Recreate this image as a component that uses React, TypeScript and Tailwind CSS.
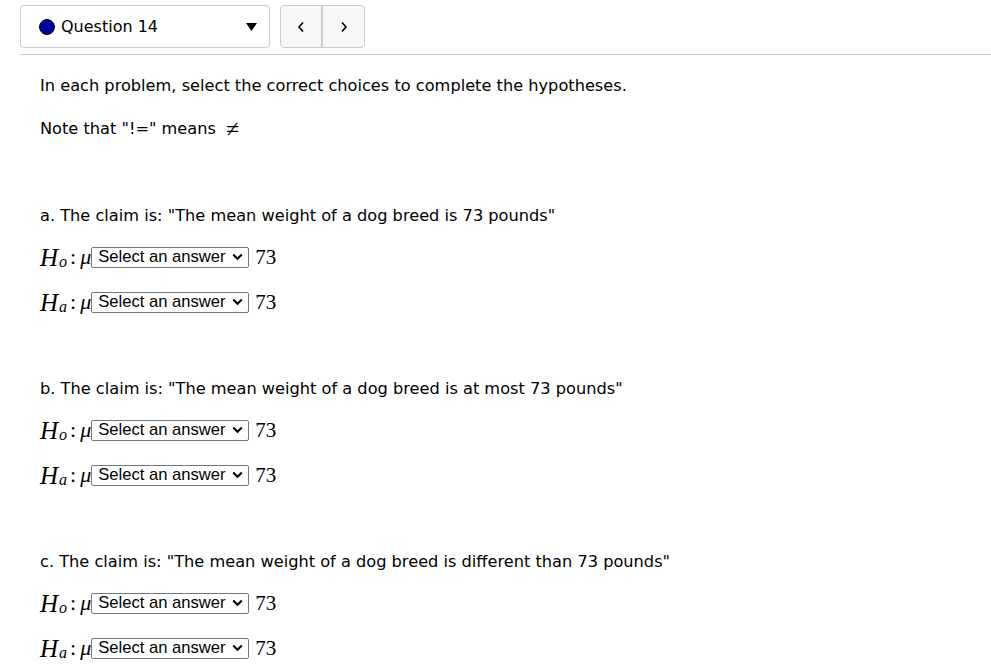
import React from "react";

function Chevron() {
  return (
    <svg width="11" height="8" viewBox="0 0 11 8" className="ml-[6px]">
      <path d="M1.2 1.5 L5.5 5.8 L9.8 1.5" fill="none" stroke="#000" strokeWidth="2" />
    </svg>
  );
}

function SelectBox() {
  return (
    <span className="inline-flex items-center h-[21px] w-[158px] border border-[#767676] rounded-[2px] bg-white pl-[6px] pr-[4px] text-[16.6px] leading-none text-black font-['Liberation_Sans',Arial,sans-serif] not-italic">
      Select an answer
      <Chevron />
    </span>
  );
}

function HypRow({ sub }: { sub: string }) {
  return (
    <div className="flex items-center h-[24px] font-['Liberation_Serif','Times_New_Roman',serif] text-black">
      <span className="italic text-[25px] leading-none">H</span>
      <span className="italic text-[16px] leading-none mt-[10px] ml-[1px]">{sub}</span>
      <span className="text-[22px] leading-none ml-[3px] mr-[4px]">:</span>
      <span className="italic text-[22px] leading-none">μ</span>
      <SelectBox />
      <span className="text-[21px] leading-none ml-[6px]">73</span>
    </div>
  );
}

function Problem({ label, claim, first }: { label: string; claim: string; first?: boolean }) {
  return (
    <div className={first ? "mt-[65px]" : "mt-[65px]"}>
      <p className="text-[16.2px] leading-[20px]">
        {label}. The claim is: "{claim}"
      </p>
      <div className="mt-[19px] space-y-[21px]">
        <HypRow sub="o" />
        <HypRow sub="a" />
      </div>
    </div>
  );
}

export default function App() {
  return (
    <div className="w-[991px] h-[669px] overflow-hidden bg-white text-black font-['DejaVu_Sans',sans-serif]">
      <div className="pl-[20px] pt-[5px]">
        <div className="flex items-center gap-[10px]">
          <div className="flex items-center w-[250px] h-[43px] border border-[#ccc] rounded-[4px] pl-[18px] pr-[10px]">
            <span className="w-[16px] h-[16px] rounded-full bg-[#00009a] border border-black" />
            <span className="ml-[6px] text-[16px] text-black">Question 14</span>
            <svg width="11" height="8" viewBox="0 0 11 8" className="ml-auto mr-[2px]">
              <path d="M0 0 L11 0 L5.5 8 Z" fill="#000" />
            </svg>
          </div>
          <div className="flex h-[43px] border border-[#ccc] rounded-[4px] bg-[#f7f7f7]">
            <div className="w-[42px] flex items-center justify-center border-r-2 border-[#ccc]">
              <svg width="8" height="12" viewBox="0 0 8 12">
                <path d="M6 1.5 L2 6 L6 10.5" fill="none" stroke="#000" strokeWidth="1.6" />
              </svg>
            </div>
            <div className="w-[41px] flex items-center justify-center">
              <svg width="8" height="12" viewBox="0 0 8 12">
                <path d="M2 1.5 L6 6 L2 10.5" fill="none" stroke="#000" strokeWidth="1.6" />
              </svg>
            </div>
          </div>
        </div>
        <div className="mt-[6px] h-px bg-[#ccc]" />
      </div>
      <div className="px-[40px] pt-[21px] text-black">
        <p className="text-[16.2px] leading-[20px]">
          In each problem, select the correct choices to complete the hypotheses.
        </p>
        <p className="mt-[21px] text-[16.2px] leading-[20px] flex items-center">
          Note that "!=" means
          <span className="ml-[10px] text-[24px] leading-none font-['Liberation_Serif',serif]">≠</span>
        </p>
        <Problem first label="a" claim="The mean weight of a dog breed is 73 pounds" />
        <Problem label="b" claim="The mean weight of a dog breed is at most 73 pounds" />
        <Problem label="c" claim="The mean weight of a dog breed is different than 73 pounds" />
      </div>
    </div>
  );
}
